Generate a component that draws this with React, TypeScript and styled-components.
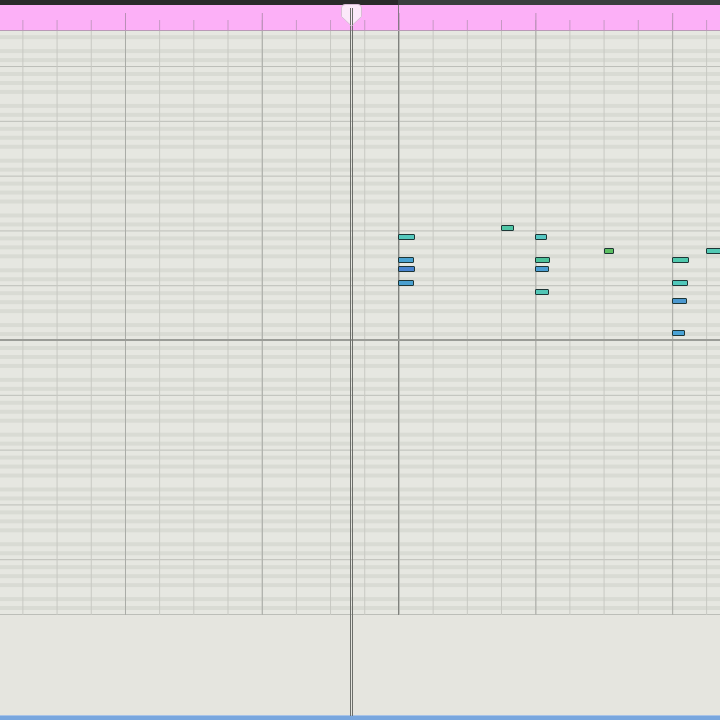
import styled, { createGlobalStyle } from 'styled-components'

const GlobalStyle = createGlobalStyle`
  html, body {
    margin: 0;
    padding: 0;
    background: #e6e6e0;
    font-family: "Liberation Sans", Arial, sans-serif;
  }
`

// piano roll geometry
const BEAT = 34.2
const BAR = BEAT * 4
const FIRST_BAR = 125
const OCTAVE = 54.8

type Note = { x: number; y: number; w: number; fill: string }

// positions are page coords, grid starts at y=31
const notes: Note[] = [
  { x: 398, y: 234, w: 17, fill: '#55c9bd' },
  { x: 501, y: 225, w: 13, fill: '#4fc6a6' },
  { x: 535, y: 234, w: 12, fill: '#55c7c2' },
  { x: 604, y: 248, w: 10, fill: '#5cbf62' },
  { x: 706, y: 248, w: 16, fill: '#52c9b4' },
  { x: 398, y: 257, w: 16, fill: '#4aa3d2' },
  { x: 398, y: 266, w: 17, fill: '#4a84d0' },
  { x: 398, y: 280, w: 16, fill: '#4aa0d0' },
  { x: 535, y: 257, w: 15, fill: '#4cc29a' },
  { x: 535, y: 266, w: 14, fill: '#4b9ed3' },
  { x: 535, y: 289, w: 14, fill: '#52c6b6' },
  { x: 672, y: 257, w: 17, fill: '#4fc8ac' },
  { x: 672, y: 280, w: 16, fill: '#50c8bb' },
  { x: 672, y: 298, w: 15, fill: '#4b98cf' },
  { x: 672, y: 330, w: 13, fill: '#4aa3d6' },
]

const Screen = styled.div`
  position: relative;
  height: 720px;
  display: flex;
  flex-direction: column;
  overflow: hidden;
  background: #e6e6e0;
`

const TopBar = styled.div`
  display: flex;
  height: 5px;
  flex: none;
`

const TopSeg = styled.div<{ $tone: string; $width?: number }>`
  background: ${(p) => p.$tone};
  flex: ${(p) => (p.$width ? `0 0 ${p.$width}px` : '1')};
`

const Ruler = styled.div`
  flex: none;
  height: 25px;
  border-bottom: 1px solid #b99ab6;
  background:
    linear-gradient(to right, #857884 1px, transparent 1px) 398px 0 / 100% 100% no-repeat,
    linear-gradient(to right, #b98fb6 1px, transparent 1px) ${FIRST_BAR}px 8px / ${BAR}px 17px repeat-x,
    linear-gradient(to right, #c598c2 1px, transparent 1px) ${FIRST_BAR - 3 * BEAT}px 15px / ${BEAT}px 10px repeat-x,
    #fcb0f7;
`

const stripes = (() => {
  const dark = [1, 3, 6, 8, 10]
  const stops: string[] = []
  for (let i = 0; i < 12; i++) {
    const c = dark.includes(i) ? '#d9dbd4' : '#e6e7e1'
    stops.push(`${c} ${((i * 100) / 12).toFixed(3)}%`, `${c} ${(((i + 1) * 100) / 12).toFixed(3)}%`)
  }
  return `linear-gradient(to top, ${stops.join(', ')})`
})()

const Grid = styled.div`
  position: relative;
  flex: none;
  height: 584px;
  background:
    linear-gradient(#9a9c97, #9a9c97) 0 308px / 100% 2px no-repeat,
    linear-gradient(to right, #80827e 1px, transparent 1px) 398px 0 / 100% 100% no-repeat,
    linear-gradient(to right, #aaaca7 1px, transparent 1px) ${FIRST_BAR}px 0 / ${BAR}px 100% repeat-x,
    linear-gradient(to right, #c7c8c2 1px, transparent 1px) ${FIRST_BAR - 3 * BEAT}px 0 / ${BEAT}px 100% repeat-x,
    linear-gradient(to top, #bcbeb8 1px, transparent 1px) 0 100% / 100% ${OCTAVE}px repeat-y,
    ${stripes} 0 100% / 100% ${OCTAVE}px repeat-y;
`

const NoteBox = styled.div`
  position: absolute;
  box-sizing: border-box;
  height: 6px;
  border: 1px solid #1e3636;
  border-radius: 1px;
`

const Empty = styled.div`
  flex: 1;
  background: #e5e5df;
`

const BottomStrip = styled.div`
  flex: none;
  height: 4px;
  background: #78a6de;
  border-top: 1px solid #a7c3e8;
`

const Playhead = styled.div`
  position: absolute;
  left: 350px;
  top: 8px;
  bottom: 4px;
  width: 3px;
  box-sizing: border-box;
  border-left: 1px solid #6c6e6a;
  border-right: 1px solid #6c6e6a;
`

const Marker = styled.svg`
  position: absolute;
  left: 341px;
  top: 4px;
`

const App = () => {
  return (
    <>
      <GlobalStyle />
      <Screen>
        <TopBar>
          <TopSeg $tone="#2a2a2a" $width={398} />
          <TopSeg $tone="#3a3e3e" />
        </TopBar>
        <Ruler />
        <Grid>
          {notes.map((n, i) => (
            <NoteBox
              key={i}
              style={{ left: n.x, top: n.y - 31, width: n.w, background: n.fill }}
            />
          ))}
        </Grid>
        <Empty />
        <BottomStrip />
        <Playhead />
        <Marker width="21" height="23" viewBox="0 0 21 23">
          <path
            d="M4 0.5 H17 Q20.5 0.5 20.5 4 V12.5 L10.5 22 L0.5 12.5 V4 Q0.5 0.5 4 0.5 Z"
            fill="#fbe9f9"
            stroke="#d8bcd5"
          />
          <line x1="9.5" y1="4" x2="9.5" y2="21" stroke="#6c6e6a" />
          <line x1="11.5" y1="4" x2="11.5" y2="21" stroke="#6c6e6a" />
        </Marker>
      </Screen>
    </>
  )
}

export default App
